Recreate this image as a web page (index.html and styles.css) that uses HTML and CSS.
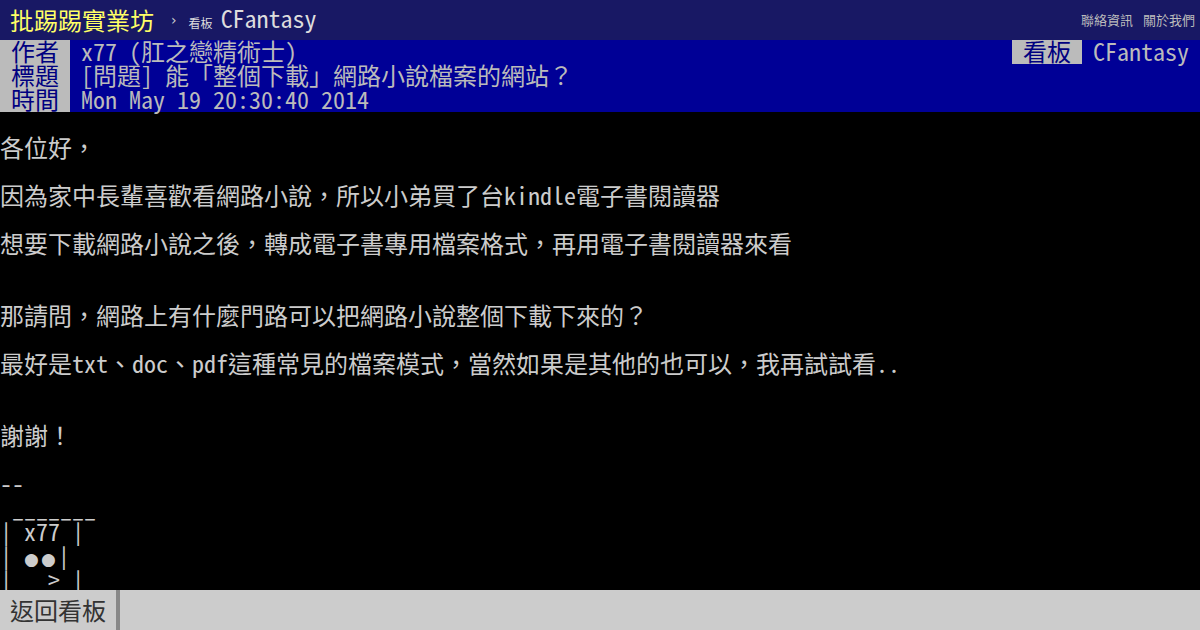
FILE: index.html
```html
<!DOCTYPE html>
<html lang="zh-Hant">
<head>
    <meta charset="UTF-8">
    <meta name="viewport" content="width=device-width, initial-scale=1.0">
    <title>[問題] 能「整個下載」網路小說檔案的網站？ - 看板 CFantasy - 批踢踢實業坊</title>
    <link rel="stylesheet" href="styles.css">
</head>
<body>
    <div id="topbar">
        <a class="logo" href="#">批踢踢實業坊</a>
        <span class="crumb">›</span>
        <a class="board" href="#"><span class="board-label">看板</span>CFantasy</a>
        <div class="topbar-right">
            <a href="#">聯絡資訊</a>
            <a href="#">關於我們</a>
        </div>
    </div>

    <div class="metalines">
        <div class="metaline">
            <div><span class="tag">作者</span><span class="value">x77 (肛之戀精術士)</span></div>
            <div class="metaline-right"><span class="tag">看板</span><span class="value">CFantasy</span></div>
        </div>
        <div class="metaline">
            <div><span class="tag">標題</span><span class="value">[問題] 能「整個下載」網路小說檔案的網站？</span></div>
        </div>
        <div class="metaline">
            <div><span class="tag">時間</span><span class="value">Mon May 19 20:30:40 2014</span></div>
        </div>
    </div>

    <div id="main-content">
        <div class="line"></div>
        <div class="line">各位好，</div>
        <div class="line"></div>
        <div class="line">因為家中長輩喜歡看網路小說，所以小弟買了台kindle電子書閱讀器</div>
        <div class="line"></div>
        <div class="line">想要下載網路小說之後，轉成電子書專用檔案格式，再用電子書閱讀器來看</div>
        <div class="line"></div>
        <div class="line"></div>
        <div class="line">那請問，網路上有什麼門路可以把網路小說整個下載下來的？</div>
        <div class="line"></div>
        <div class="line">最好是txt、doc、pdf這種常見的檔案模式，當然如果是其他的也可以，我再試試看..</div>
        <div class="line"></div>
        <div class="line"></div>
        <div class="line">謝謝！</div>
        <div class="line"></div>
        <div class="line">--</div>
        <div class="line"> _______</div>
        <div class="line"><span class="bx">│</span> x77 <span class="bx">│</span></div>
        <div class="line"><span class="bx">│</span> <span class="dot">●●</span><span class="bx">│</span></div>
        <div class="line"><span class="bx">│</span>   &gt; <span class="bx">│</span></div>
    </div>

    <div id="footer">
        <a class="back" href="#">返回看板</a>
    </div>
</body>
</html>
```

FILE: styles.css
```css
body {
    margin: 0;
    height: 630px;
    overflow: hidden;
    background-color: #000;
    color: #ccc;
    font-family: "Noto Sans Mono CJK TC", "Noto Sans CJK TC", monospace;
    font-size: 24px;
    line-height: 24px;
}
a {
    color: inherit;
    text-decoration: none;
}
.bx {
    font-family: "DejaVu Sans Mono", monospace;
    font-size: 20px;
}
.dot {
    font-family: "DejaVu Sans", sans-serif;
    font-size: 17px;
    letter-spacing: 2px;
}

#topbar {
    display: flex;
    align-items: center;
    height: 40px;
    padding: 0 5px 0 10px;
    background-color: #181864;
    color: #ddd;
}
.logo {
    font-family: "Noto Sans CJK TC", sans-serif;
    color: #ffff66;
}
.crumb {
    margin-left: 17px;
    font-family: "DejaVu Sans", sans-serif;
    font-size: 14px;
    color: #ccc;
}
.board {
    margin-left: 12px;
}
.board-label {
    font-family: "Noto Sans CJK TC", sans-serif;
    font-size: 12px;
    margin-right: 8px;
}
.topbar-right {
    margin-left: auto;
    display: flex;
    gap: 10px;
    font-family: "Noto Sans CJK TC", sans-serif;
    font-size: 13px;
    color: #bbb;
}

.metalines {
    background-color: #000096;
    color: #bbb;
}
.metaline {
    display: flex;
    justify-content: space-between;
    height: 24px;
    line-height: 22px;
    white-space: pre;
}
.tag {
    display: inline-block;
    width: 70px;
    height: 24px;
    padding-left: 11px;
    box-sizing: border-box;
    background-color: #bbb;
    color: #000080;
    vertical-align: top;
}
.value {
    padding: 0 11px;
}

.line {
    height: 24px;
    line-height: 22px;
    white-space: pre;
}

#footer {
    position: fixed;
    left: 0;
    right: 0;
    bottom: 0;
    height: 40px;
    display: flex;
    background-color: #ccc;
}
.back {
    padding: 0 10px;
    border-right: 4px solid #888;
    color: #333;
    font-family: "Noto Sans CJK TC", sans-serif;
    line-height: 40px;
}
```
